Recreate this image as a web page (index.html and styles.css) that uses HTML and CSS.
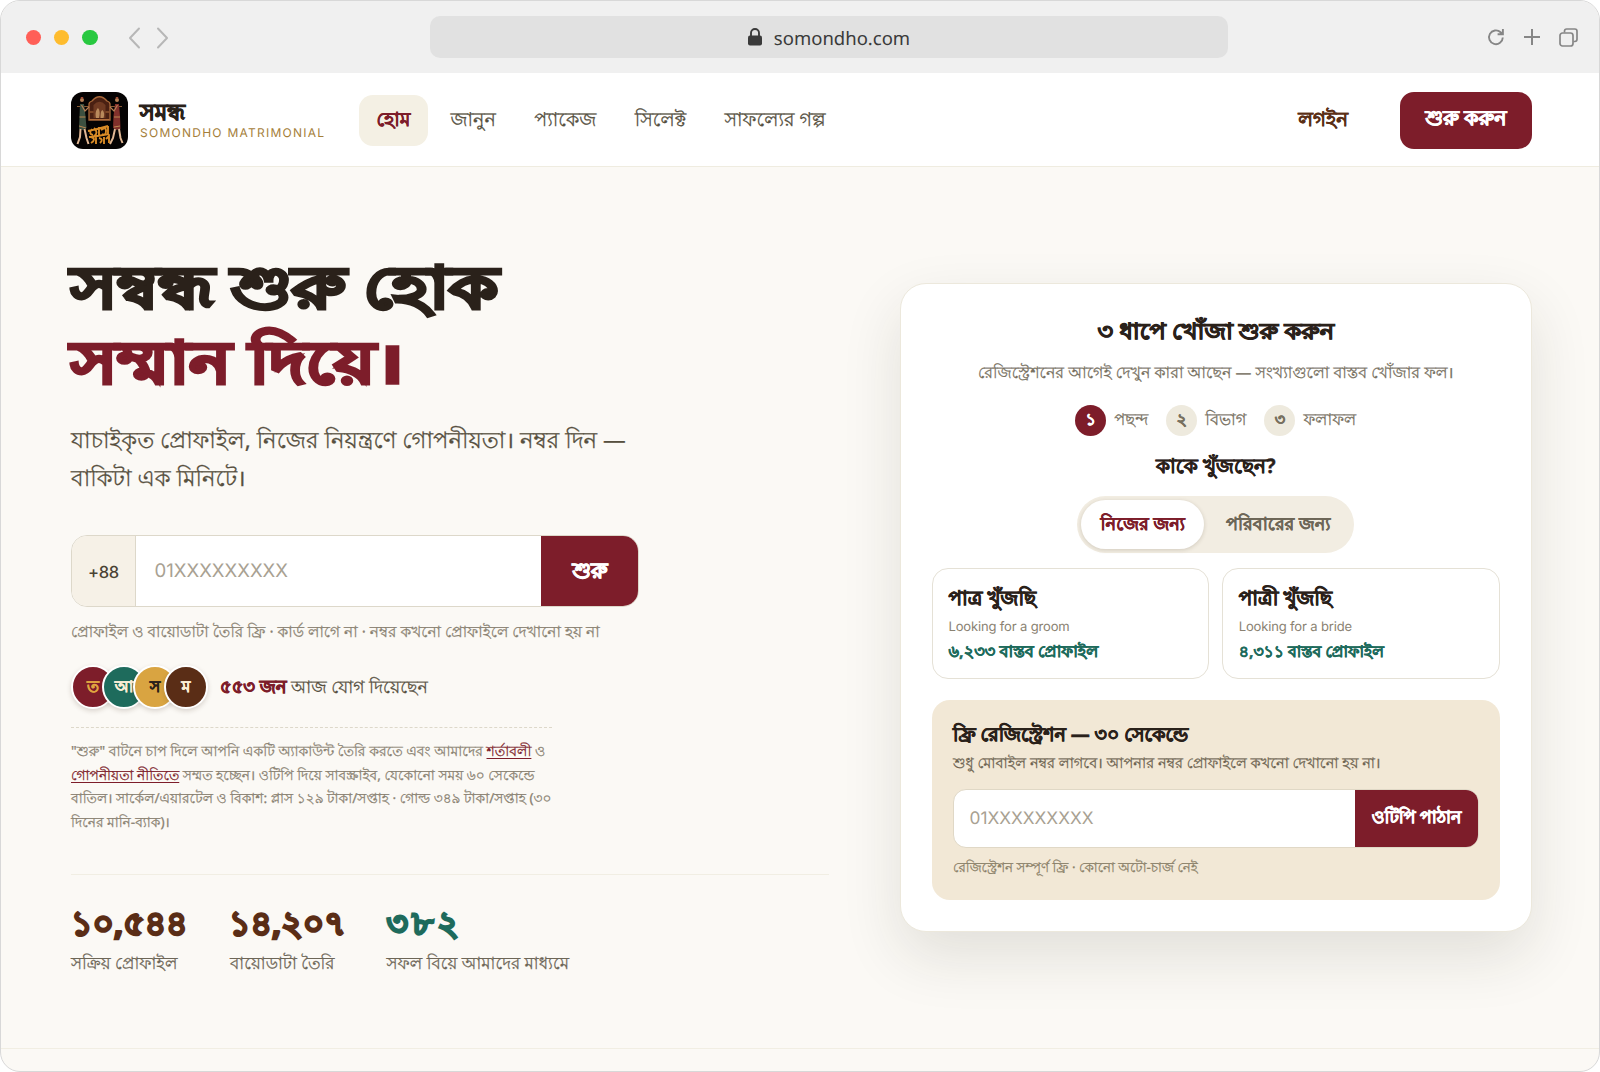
FILE: index.html
```html
<!DOCTYPE html>
<html lang="bn">
<head>
<meta charset="utf-8">
<title>সমন্ধ</title>
<link rel="stylesheet" href="styles.css">
</head>
<body>
<div class="window">
  <div class="chrome">
    <div class="chrome-left">
      <span class="light red"></span><span class="light yellow"></span><span class="light green"></span>
      <svg class="chevrons" width="42" height="24" viewBox="0 0 42 24" fill="none" stroke="#b7b7b7" stroke-width="2" stroke-linecap="round" stroke-linejoin="round"><path d="M11 2.500 2 12l9 9.500M30 2.500 39 12l-9 9.500"/></svg>
    </div>
    <div class="address">
      <svg width="14" height="18" viewBox="0 0 14 18"><rect x="0" y="7.500" width="14" height="10" rx="2" fill="#3a3a3a"/><path d="M3 8.500V5a4 4 0 0 1 8 0v3.500" fill="none" stroke="#3a3a3a" stroke-width="1.900"/></svg>
      <span>somondho.com</span>
    </div>
    <div class="chrome-right">
      <svg width="18" height="18" viewBox="0 0 18 18" fill="none" stroke="#868686" stroke-width="1.900"><path d="M15.800 9.500A6.900 6.900 0 1 1 13.600 4.200L15.400 5.800M15.900 1v5.300h-5.300"/></svg>
      <svg width="18" height="18" viewBox="0 0 18 18" fill="none" stroke="#868686" stroke-width="2"><path d="M9 1v16M1 9h16"/></svg>
      <svg width="19" height="19" viewBox="0 0 19 19" fill="none" stroke="#868686" stroke-width="1.700"><rect x="1" y="5" width="13" height="13" rx="2.500"/><path d="M5.500 4.500V3.200A2.200 2.200 0 0 1 7.700 1h8.100A2.200 2.200 0 0 1 18 3.200v8.100a2.200 2.200 0 0 1-2.200 2.200h-1.300"/></svg>
    </div>
  </div>

  <header class="header">
    <svg class="logo" width="57" height="57" viewBox="0 0 57 57">
      <rect width="57" height="57" rx="12" fill="#050303"/>
      <path d="M6 14.500h45" stroke="#8a5a34" stroke-width="1.200"/>
      <path d="M18 28V12q0-2 3-3 7.500-8.500 15 0 3 1 3 3v16z" fill="#4a2012" stroke="#a8683a" stroke-width="1.300"/>
      <path d="M22.500 26V13q6-6.500 12 0v13z" fill="#6f3a22"/>
      <path d="M25 26c-1-5 0-8 2-10 2 2 2 6 1 10M29.500 26c0-4 0-7 2-8 2 2 2 5 1 8" fill="#b98a5c"/>
      <path d="M19 27.500h19M19 20h3.500M34.500 20H38" stroke="#b06c3a" stroke-width="1.200"/>
      <circle cx="11" cy="8" r="2" fill="#b57f56"/><circle cx="46" cy="8" r="2" fill="#b57f56"/>
      <path d="M11 5v1.500M46 5v1.500" stroke="#a24a35" stroke-width="2.400"/>
      <path d="M9 12h4l1.500 12 1 12-3.500 2-4-1 .5-13z" fill="#3c5040"/>
      <path d="M44 12h4l1 12 .5 13-4 1-3.500-2 .5-12z" fill="#81302b"/>
      <path d="M8.500 25h6M8 34l7 2M43 25h6M43 35l6-1" stroke="#b98550" stroke-width="1"/>
      <path d="M10.500 13l3.500 6 4-4M46.500 13l-3.500 6-4-4" fill="none" stroke="#b57f56" stroke-width="1.200"/>
      <path d="M9.500 37 9 45l-2.500 7M13.500 37l2 9 2 6M44 37l-2 9-3 6M48 37l1.500 9 2 5" fill="none" stroke="#e0b794" stroke-width="2"/>
      <path d="M17 39q10-2 20-5M21 37q-4 5 1 6M23 36q5 5 0 8M28 35v8M30 38q5-4 5 1t-4 3M37 34v8M18 45q10-1 20-3M20 45q6 2 0 6M25 45v7M28 46q5 1 1 5M33 45v7M35 47l3-3v7" fill="none" stroke="#d98b26" stroke-width="1.900"/>
    </svg>
    <div class="brand">
      <div class="brand-name">সমন্ধ</div>
      <div class="brand-sub">SOMONDHO MATRIMONIAL</div>
    </div>
    <nav class="nav">
      <a class="active">হোম</a><a class="n1">জানুন</a><a class="n2">প্যাকেজ</a><a class="n3">সিলেক্ট</a><a class="n4">সাফল্যের গল্প</a>
    </nav>
    <a class="login">লগইন</a>
    <a class="start">শুরু করুন</a>
  </header>

  <main class="main">
    <section class="hero">
      <h1>সম্বন্ধ শুরু হোক<br><em>সম্মান দিয়ে।</em></h1>
      <p class="lead">যাচাইকৃত প্রোফাইল, নিজের নিয়ন্ত্রণে গোপনীয়তা। নম্বর দিন —<br>বাকিটা এক মিনিটে।</p>
      <div class="phone">
        <span class="prefix">+88</span><span class="entry">01XXXXXXXXX</span><span class="go">শুরু</span>
      </div>
      <p class="hint">প্রোফাইল ও বায়োডাটা তৈরি ফ্রি · কার্ড লাগে না · নম্বর কখনো প্রোফাইলে দেখানো হয় না</p>
      <div class="joined">
        <div class="avatars"><span class="a1">ত</span><span class="a2">আ</span><span class="a3">স</span><span class="a4">ম</span></div>
        <p><b>৫৫৩ জন</b> আজ যোগ দিয়েছেন</p>
      </div>
      <p class="legal"><span class="wide">"শুরু" বাটনে চাপ দিলে আপনি একটি অ্যাকাউন্ট তৈরি করতে এবং আমাদের <a>শর্তাবলী</a> ও</span><br><a>গোপনীয়তা নীতিতে</a> সম্মত হচ্ছেন। ওটিপি দিয়ে সাবস্ক্রাইব, যেকোনো সময় ৬০ সেকেন্ডে<br>বাতিল। সার্কেল/এয়ারটেল ও বিকাশ: প্লাস ১২৯ টাকা/সপ্তাহ · গোল্ড ৩৪৯ টাকা/সপ্তাহ (৩০<br>দিনের মানি-ব্যাক)।</p>
      <div class="stats">
        <div class="stat s1"><strong>১০,৫৪৪</strong><span>সক্রিয় প্রোফাইল</span></div>
        <div class="stat s2"><strong>১৪,২০৭</strong><span>বায়োডাটা তৈরি</span></div>
        <div class="stat s3"><strong>৩৮২</strong><span>সফল বিয়ে আমাদের মাধ্যমে</span></div>
      </div>
    </section>

    <aside class="card">
      <h2>৩ ধাপে খোঁজা শুরু করুন</h2>
      <p class="card-sub">রেজিস্ট্রেশনের আগেই দেখুন কারা আছেন — সংখ্যাগুলো বাস্তব খোঁজার ফল।</p>
      <div class="steps">
        <span class="step on"><i>১</i>পছন্দ</span><span class="step"><i>২</i>বিভাগ</span><span class="step"><i>৩</i>ফলাফল</span>
      </div>
      <h3>কাকে খুঁজছেন?</h3>
      <div class="toggle"><span class="on">নিজের জন্য</span><span>পরিবারের জন্য</span></div>
      <div class="choices">
        <div class="choice"><h4>পাত্র খুঁজছি</h4><small>Looking for a groom</small><b>৬,২৩৩ বাস্তব প্রোফাইল</b></div>
        <div class="choice"><h4>পাত্রী খুঁজছি</h4><small>Looking for a bride</small><b class="tight">৪,৩১১ বাস্তব প্রোফাইল</b></div>
      </div>
      <div class="register">
        <h5>ফ্রি রেজিস্ট্রেশন — ৩০ সেকেন্ডে</h5>
        <p class="reg-text">শুধু মোবাইল নম্বর লাগবে। আপনার নম্বর প্রোফাইলে কখনো দেখানো হয় না।</p>
        <div class="otp"><span class="entry">01XXXXXXXXX</span><span class="send">ওটিপি পাঠান</span></div>
        <p class="reg-note">রেজিস্ট্রেশন সম্পূর্ণ ফ্রি · কোনো অটো-চার্জ নেই</p>
      </div>
    </aside>
  </main>
  <div class="next"></div>
</div>
</body>
</html>
```
FILE: styles.css
```css
* { box-sizing: border-box; margin: 0; padding: 0; }
html, body { width: 1600px; height: 1072px; overflow: hidden; background: #fff; }
body {
  font-family: "Noto Sans", sans-serif;
  color: #2a211a;
  text-rendering: geometricPrecision;
  white-space: nowrap;
  -webkit-text-stroke: 0.25px currentColor;
}
.window {
  width: 1600px; height: 1072px;
  display: flex; flex-direction: column;
  border: 1px solid #d8d8d8; border-radius: 20px;
  overflow: hidden; background: #fbf9f5;
}

/* Browser bar */
.chrome {
  height: 72px; flex: none;
  display: grid; grid-template-columns: 429px 798px 1fr;
  align-items: center;
  background: #f0f0f0;
}
.chrome-left { display: flex; align-items: center; padding: 1px 0 0 24.500px; }
.light { width: 15.500px; height: 15.500px; border-radius: 50%; margin-right: 12.800px; }
.red { background: #ff5f57; }
.yellow { background: #febc2e; }
.green { background: #28c840; }
.chevrons { margin-left: 17.500px; }
.address {
  height: 41.500px; border-radius: 10px; background: #e1e1e1;
  display: flex; align-items: center; justify-content: center; gap: 12px;
  font: 18.500px "Noto Sans", sans-serif; color: #3a3a3a; -webkit-text-stroke: 0;
}
.address span { padding-top: 2px; }
.chrome-right { display: flex; justify-content: flex-end; align-items: center; gap: 18px; padding-right: 21.500px; }

/* Site header */
.header {
  height: 94px; flex: none;
  display: flex; align-items: center;
  padding: 2px 67px 0 70px;
  background: #fff; border-bottom: 1px solid #efece0;
}
.logo { flex: none; }
.brand { width: 219px; margin-left: 12px; }
.brand-name { font-size: 22.400px; line-height: 28px; font-weight: 700; margin-top: -4px; -webkit-text-stroke: 0.9px; }
.brand-sub { margin-top: -1px; font: 12px/15px Inter, sans-serif; letter-spacing: 1.260px; color: #a5803a; -webkit-text-stroke: 0; }
.nav { display: flex; align-items: center; flex: 1; font-size: 19.100px; color: #56503f; }
.nav a { height: 51px; line-height: 48px; text-align: center; }
.nav .active { width: 69px; border-radius: 14px; background: #f4f0e4; color: #7d1d2a; font-weight: 700; }
.nav .n1 { margin-left: 22.500px; }
.nav .n2, .nav .n3, .nav .n4 { margin-left: 38.300px; }
.login { font-size: 19.800px; line-height: 48px; font-weight: 600; color: #5b2f16; -webkit-text-stroke: 0.1px; height: 51px; margin-right: 52px; }
.start {
  width: 132px; height: 57px; border-radius: 14px;
  background: #7d1d2a; color: #fff; text-align: center;
  font-size: 20.500px; line-height: 53px; font-weight: 700; -webkit-text-stroke: 0.7px;
}

/* Hero */
.main { display: flex; height: 881px; flex: none; padding-left: 70px; }
.hero { width: 758px; padding-top: 81.500px; }
h1 {
  height: 150.600px; margin-left: 0;
  font-size: 69.900px; line-height: 90.700px; font-weight: 700; color: #2a211a;
  -webkit-text-stroke: 4px;
  transform: scaleY(0.83); transform-origin: 0 0;
}
h1 em { font-style: normal; color: #7d1d2a; }
.lead { margin-top: 22px; font-size: 22.700px; line-height: 37.900px; color: #57503f; }
.phone {
  width: 568px; height: 72.500px; margin-top: 38px;
  display: flex; border-radius: 16px; overflow: hidden;
  border: 1px solid #ddd8ca; background: #fff;
}
.prefix {
  width: 64px; background: #f6f1e7; border-right: 1px solid #ddd8ca;
  font: 500 16.500px/72px Inter, sans-serif; letter-spacing: -0.300px; text-align: center; color: #4a4334; -webkit-text-stroke: 0;
}
.entry { flex: 1; font-family: Inter, sans-serif; color: #a8a192; -webkit-text-stroke: 0; font-weight: 400; }
.phone .entry { padding-left: 18.500px; font-size: 18.600px; line-height: 71px; }
.go { width: 98px; margin: -1px; background: #7d1d2a; color: #fff; font-size: 21.500px; font-weight: 700; line-height: 71px; text-align: center; -webkit-text-stroke: 0.9px; }
.hint { margin-top: 13px; font-size: 15.350px; line-height: 24px; color: #8a8272; }
.joined { display: flex; align-items: center; margin-top: 21px; height: 44px; }
.avatars { display: flex; }
.avatars span {
  width: 44px; height: 44px; margin-right: -13px;
  border: 2px solid #fff; border-radius: 50%;
  font-size: 16px; line-height: 38px; font-weight: 700; text-align: center; color: #fbeed6;
  box-shadow: 0 2px 5px rgba(60, 40, 20, 0.18);
}
.avatars .a1 { background: #7d1d2a; color: #e0a640; }
.avatars .a2 { background: #1e6b5c; }
.avatars .a3 { background: #d9a441; color: #2a211a; }
.avatars .a4 { background: #5a2d16; }
.joined p { margin-left: 25px; font-size: 17.300px; line-height: 40px; color: #57503f; }
.joined b { font-size: 18px; color: #7d1d2a; -webkit-text-stroke: 0.7px; }
.legal {
  width: 481px; margin-top: 18px; padding-top: 12px;
  border-top: 1px dashed #ddd8ca;
  font-size: 13.750px; line-height: 23.450px; color: #8a8272;
}
.legal .wide { font-size: 13.950px; }
.legal a { color: #7d1d2a; text-decoration: underline; text-underline-offset: 2px; text-decoration-thickness: 1px; }
.stats { display: flex; margin-top: 40px; padding-top: 28px; border-top: 1px solid #f1eee3; }
.stat strong { display: block; font-size: 33px; line-height: 40px; color: #5a2d16; -webkit-text-stroke: 2.200px; }
.stat span { display: block; margin-top: 7px; font-size: 16.750px; line-height: 26px; color: #6d6657; }
.s1 { width: 159px; }
.s2 { width: 156.500px; }
.s2 strong { margin-left: -1px; }
.s3 strong { color: #1e6b5c; letter-spacing: 4px; }

/* Search card */
.card {
  width: 631.500px; height: 648.500px; margin: 116px 0 0 71px; padding: 29.500px 31px 0;
  border: 1px solid #ece8dc; border-radius: 26px; background: #fff;
  box-shadow: 0 24px 60px rgba(45, 42, 25, 0.12);
  text-align: center;
}
h2 { font-size: 24px; line-height: 36px; margin-bottom: -2px; font-weight: 700; -webkit-text-stroke: 0.9px; transform: scaleY(0.92); }
.card-sub { margin-top: 12.500px; font-size: 15.850px; line-height: 24px; color: #77705f; }
.steps { display: flex; justify-content: center; gap: 18px; height: 31px; margin-top: 20.500px; font-size: 16.300px; line-height: 28px; color: #77705f; }
.step { display: flex; gap: 8px; }
.step i { width: 31px; height: 31px; border-radius: 50%; background: #eeeade; font-style: normal; font-weight: 700; font-size: 16px; -webkit-text-stroke: 0.5px; }
.step.on i { background: #7d1d2a; color: #fff; }
h3 { margin-top: 16.500px; font-size: 20px; line-height: 28px; font-weight: 700; -webkit-text-stroke: 0.4px; }
.toggle {
  width: 277px; height: 57px; margin: 15.500px auto 0; padding: 4px;
  display: flex; border-radius: 29px; background: #f2ede2;
  font-size: 17.700px; line-height: 48px; font-weight: 700; color: #6d6657; -webkit-text-stroke: 0.15px;
}
.toggle span { flex: 1; height: 49px; border-radius: 25px; padding-left: 2px; }
.toggle .on { flex: none; width: 123px; padding-left: 0; background: #fff; color: #7d1d2a; box-shadow: 0 1px 4px rgba(60, 45, 20, 0.18); -webkit-text-stroke: 0.4px; }
.choices { display: grid; grid-template-columns: 1fr 1fr; gap: 13px; margin-top: 15.500px; text-align: left; }
.choice { height: 110.500px; padding: 15px 15.500px 0; border: 1px solid #e5e1d6; border-radius: 16px; }
h4 { font-size: 19.900px; line-height: 28px; font-weight: 700; -webkit-text-stroke: 0.6px; }
.choice small { display: block; margin-top: 5px; font: 13px/20px Inter, sans-serif; letter-spacing: -0.150px; color: #8a8272; -webkit-text-stroke: 0; }
.choice b { display: block; margin-top: 1.500px; font-size: 16.200px; line-height: 24px; color: #1e6b5c; -webkit-text-stroke: 0.4px; }
.choice .tight { font-size: 15.700px; }
.register { height: 200px; margin-top: 21px; padding: 20.300px 21px 0; border-radius: 18px; background: #f2e8d6; text-align: left; }
h5 { font-size: 19px; line-height: 28px; font-weight: 700; -webkit-text-stroke: 0.6px; }
.reg-text { margin-top: 4.400px; font-size: 14.500px; line-height: 22px; color: #6d6350; }
.otp { display: flex; height: 59px; margin-top: 14.500px; border: 1px solid #e0d8c6; border-radius: 13px; background: #fff; overflow: hidden; }
.otp .entry { padding-left: 15.500px; font-size: 17.300px; line-height: 58px; }
.send { width: 124px; margin: -1px; background: #7d1d2a; color: #fff; font-size: 17.300px; font-weight: 700; line-height: 58px; text-align: center; -webkit-text-stroke: 0.6px; }
.reg-note { margin-top: 8.500px; font-size: 13.400px; line-height: 22px; color: #8a8068; }

.next { flex: 1; border-top: 1px solid #f1eee3; }
```
